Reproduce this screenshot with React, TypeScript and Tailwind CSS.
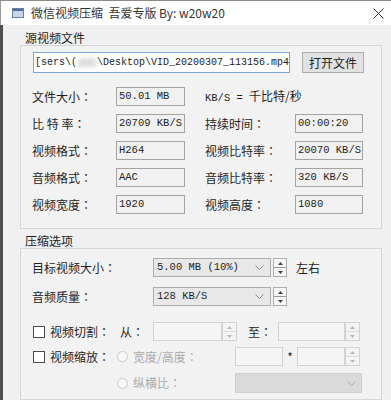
import clsx from "clsx";

const mono = "font-['Liberation_Mono','Noto_Sans_CJK_SC',monospace] text-[10.5px] whitespace-nowrap";
const tc = "font-['Noto_Sans_CJK_TC',sans-serif]";

function WindowIcon() {
  return (
    <svg width="12" height="10" viewBox="0 0 12 10">
      <rect x="0.5" y="0.5" width="11" height="9" fill="#c9d6e8" stroke="#6b7f9e" />
      <rect x="1" y="1" width="10" height="2" fill="#4b6fa6" />
    </svg>
  );
}

function CloseIcon() {
  return (
    <svg width="11" height="11" viewBox="0 0 11 11" className="ml-auto">
      <path d="M0.5 0.5L10.5 10.5M10.5 0.5L0.5 10.5" stroke="#333" strokeWidth="1" />
    </svg>
  );
}

function Chevron({ color = "#8a8a8a" }: { color?: string }) {
  return (
    <svg width="9" height="5" viewBox="0 0 9 5">
      <polyline points="0.5,0.5 4.5,4.5 8.5,0.5" fill="none" stroke={color} strokeWidth="1" />
    </svg>
  );
}

function Spinner({ disabled, w = 14 }: { disabled?: boolean; w?: number }) {
  const fill = disabled ? "#b8b8b8" : "#444";
  return (
    <div
      className={clsx(
        "flex h-full flex-col border",
        w === 14 ? "w-[14px]" : "w-[15px]",
        disabled ? "border-[#d2d2d2] bg-[#f3f3f3]" : "border-[#adadad] bg-[#f6f6f6]"
      )}
    >
      <div
        className={clsx(
          "flex flex-1 items-center justify-center border-b",
          disabled ? "border-[#dcdcdc]" : "border-[#9a9a9a]"
        )}
      >
        <svg width="5" height="3" viewBox="0 0 5 3">
          <path d="M0 3L2.5 0L5 3Z" fill={fill} />
        </svg>
      </div>
      <div className="flex flex-1 items-center justify-center">
        <svg width="5" height="3" viewBox="0 0 5 3">
          <path d="M0 0L5 0L2.5 3Z" fill={fill} />
        </svg>
      </div>
    </div>
  );
}

function ReadBox({ value, className }: { value: string; className: string }) {
  return (
    <div
      className={clsx(
        "flex h-full items-center overflow-hidden border border-[#a3a3a3] bg-[#f1f1f1] pl-[2px] text-[#222]",
        mono,
        className
      )}
    >
      {value}
    </div>
  );
}

function Checkbox() {
  return <div className="h-[12px] w-[12px] shrink-0 border border-[#4a4a4a] bg-white" />;
}

function Radio() {
  return <div className="h-[11px] w-[11px] shrink-0 rounded-full border border-[#c9c9c9] bg-[#f8f8f8]" />;
}

const infoRows = [
  { left: "文件大小：", lv: "50.01 MB", right: "", rv: "" },
  { left: "比 特 率：", lv: "20709 KB/S", right: "持续时间：", rv: "00:00:20" },
  { left: "视频格式：", lv: "H264", right: "视频比特率：", rv: "20070 KB/S" },
  { left: "音频格式：", lv: "AAC", right: "音频比特率：", rv: "320 KB/S" },
  { left: "视频宽度：", lv: "1920", right: "视频高度：", rv: "1080" },
];

export default function App() {
  return (
    <div className="h-[400px] w-[391px] overflow-hidden border-t border-[#8a8a8a] bg-[#f0f0f0] font-['Noto_Sans_CJK_SC',sans-serif] text-[#1e1e1e]">
      {/* title bar */}
      <div className="flex h-[24px] items-center border-l border-[#9a9a9a] bg-white pl-[11px] pr-[7px]">
        <WindowIcon />
        <span className="ml-[7px] text-[12px] leading-none text-[#333]">
          微信视频压缩&nbsp;&nbsp;吾爱专版 By: w20w20
        </span>
        <CloseIcon />
      </div>

      <div className="flex h-[375px] border-l-[3px] border-[#4f4f4f]">
        <div className="ml-[17px] w-[362px]">
          <div className="ml-[5px] mt-[6px] h-[14px] text-[12px] leading-[14px]">源视频文件</div>

          {/* source panel */}
          <div className="flex h-[184px] flex-col border border-[#d6d6d6] bg-[#f2f2f2] pl-[11px] pt-[6px]">
            <div className="flex h-[21px] items-stretch">
              <div className="ml-[1px] flex w-[257px] items-center overflow-hidden whitespace-nowrap border border-[#7aa7d6] bg-white pl-[1px] font-['Liberation_Mono',monospace] text-[10px] text-[#222]">
                [sers\(<span className="mx-[1px] inline-block h-[9px] w-[34px] bg-[#dcdcdc] blur-[2px]" />
                \Desktop\VID_20200307_113156.mp4
              </div>
              <button className="ml-[12px] flex w-[62px] items-center justify-center border border-[#adadad] bg-[#e1e1e1] text-[12px] leading-none">
                打开文件
              </button>
            </div>

            <div className="mt-[14px] flex flex-col gap-[8px]">
              {infoRows.map((r, i) => (
                <div key={i} className="flex h-[19px] items-center text-[12px]">
                  <span className={clsx("w-[84px] whitespace-pre", tc)}>{r.left}</span>
                  <ReadBox value={r.lv} className="w-[69px]" />
                  {r.right ? (
                    <>
                      <span className={clsx("ml-[20px] w-[90px]", tc)}>{r.right}</span>
                      <ReadBox value={r.rv} className="w-[68px]" />
                    </>
                  ) : (
                    <span className="ml-[20px] text-[12px]">
                      <span className={mono}>KB/S = </span>千比特/秒
                    </span>
                  )}
                </div>
              ))}
            </div>
          </div>

          <div className="ml-[5px] mt-[5px] h-[14px] text-[12px] leading-[14px]">压缩选项</div>

          {/* compress panel */}
          <div className="flex h-[152px] flex-col border border-[#d6d6d6] bg-[#f2f2f2] pl-[11px] pt-[9px] text-[12px]">
            <div className="flex h-[19px] items-center">
              <span className={clsx("w-[121px]", tc)}>目标视频大小：</span>
              <div className="flex h-full w-[118px] items-center justify-between border border-[#adadad] bg-[#e8e8e8] pl-[3px] pr-[6px]">
                <span className={mono}>5.00 MB (10%)</span>
                <Chevron />
              </div>
              <div className="ml-[2px] h-full">
                <Spinner />
              </div>
              <span className="ml-[9px]">左右</span>
            </div>

            <div className="mt-[10px] flex h-[19px] items-center">
              <span className={clsx("w-[121px]", tc)}>音频质量：</span>
              <div className="flex h-full w-[118px] items-center justify-between border border-[#adadad] bg-[#e8e8e8] pl-[3px] pr-[6px]">
                <span className={mono}>128 KB/S</span>
                <Chevron />
              </div>
              <div className="ml-[2px] h-full">
                <Spinner />
              </div>
            </div>

            <div className="mt-[16px] flex h-[19px] items-center pl-[1px]">
              <Checkbox />
              <span className={clsx("ml-[5px] w-[70px]", tc)}>视频切割：</span>
              <span className={clsx("w-[33px]", tc)}>从：</span>
              <div className="h-full w-[69px] border border-[#d2d2d2] bg-[#f5f5f5]" />
              <Spinner disabled w={15} />
              <span className={clsx("ml-[11px] w-[30px]", tc)}>至：</span>
              <div className="h-full w-[67px] border border-[#d2d2d2] bg-[#f5f5f5]" />
              <Spinner disabled w={15} />
            </div>

            <div className="mt-[6px] flex h-[19px] items-center pl-[1px]">
              <Checkbox />
              <span className={clsx("ml-[5px] w-[67px]", tc)}>视频缩放：</span>
              <Radio />
              <span className={clsx("ml-[5px] w-[102px] text-[#ababab]", tc)}>宽度/高度：</span>
              <div className="h-full w-[48px] border border-[#d2d2d2] bg-[#f5f5f5]" />
              <span className="w-[14px] text-center">*</span>
              <div className="h-full w-[48px] border border-[#d2d2d2] bg-[#f5f5f5]" />
              <Spinner disabled w={15} />
            </div>

            <div className="mt-[7px] flex h-[20px] items-center pl-[85px]">
              <Radio />
              <span className={clsx("ml-[5px] w-[102px] text-[#ababab]", tc)}>纵横比：</span>
              <div className="flex h-full w-[127px] items-center justify-end border border-[#cfcfcf] bg-[#dadada] pr-[5px]">
                <Chevron color="#a8a8a8" />
              </div>
            </div>
          </div>
        </div>
      </div>
    </div>
  );
}
